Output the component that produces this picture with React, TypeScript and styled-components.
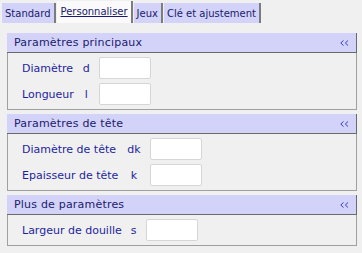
import styled, { createGlobalStyle } from 'styled-components';

const GlobalStyle = createGlobalStyle`
  html, body {
    margin: 0;
    padding: 0;
    background: #f0f0f0;
  }
  body {
    font-family: Tahoma, "DejaVu Sans", Verdana, sans-serif;
    font-size: 11px;
  }
`;

type Field = { name: string; symbol: string };
type Group = { title: string; fields: Field[] };

const tabs = ['Standard', 'Personnaliser', 'Jeux', 'Clé et ajustement'];

const groups: Group[] = [
  {
    title: 'Paramètres principaux',
    fields: [
      { name: 'Diamètre', symbol: 'd' },
      { name: 'Longueur', symbol: 'l' },
    ],
  },
  {
    title: 'Paramètres de tête',
    fields: [
      { name: 'Diamètre de tête', symbol: 'dk' },
      { name: 'Epaisseur de tête', symbol: 'k' },
    ],
  },
  {
    title: 'Plus de paramètres',
    fields: [{ name: 'Largeur de douille', symbol: 's' }],
  },
];

const CollapseIcon = () => (
  <svg width="9" height="6" viewBox="0 0 9 6">
    <polyline points="3.5,0.5 0.8,3 3.5,5.5" fill="none" stroke="#3b3bc0" strokeWidth="1" />
    <polyline points="8,0.5 5.3,3 8,5.5" fill="none" stroke="#3b3bc0" strokeWidth="1" />
  </svg>
);

const App = () => {
  return (
    <>
      <GlobalStyle />
      <Page>
        <TabBar>
          {tabs.map((t, i) => (
            <Tab key={t} $active={i === 1}>
              {t}
            </Tab>
          ))}
        </TabBar>
        <Groups>
          {groups.map((g) => (
            <Panel key={g.title}>
              <PanelHeader>
                <span>{g.title}</span>
                <CollapseIcon />
              </PanelHeader>
              <PanelBody>
                {g.fields.map((f) => (
                  <Row key={f.symbol}>
                    <Label>{f.name}</Label>
                    <Symbol>{f.symbol}</Symbol>
                    <Input type="text" />
                  </Row>
                ))}
              </PanelBody>
            </Panel>
          ))}
        </Groups>
      </Page>
    </>
  );
};

const Page = styled.div`
  width: 362px;
  height: 253px;
  box-sizing: border-box;
  padding: 1px 0 0 2px;
  background: #f0f0f0;
`;

const TabBar = styled.div`
  display: flex;
  align-items: flex-end;
  height: 22px;
`;

const Tab = styled.div<{ $active?: boolean }>`
  display: flex;
  align-items: center;
  height: ${(p) => (p.$active ? '22px' : '20px')};
  padding: ${(p) => (p.$active ? '0 3px 2px 4px' : '0 3px 0 3px')};
  box-sizing: border-box;
  margin-right: 1px;
  background: ${(p) => (p.$active ? '#fafafa' : '#d3d3f9')};
  border-right: 2px solid #7c7c7c;
  color: #1a1a6c;
  font-size: 10px;
  text-decoration: ${(p) => (p.$active ? 'underline' : 'none')};
  white-space: nowrap;
`;

const Groups = styled.div`
  display: flex;
  flex-direction: column;
  gap: 4px;
  margin: 10px 0 0 5px;
  width: 350px;
`;

const Panel = styled.div`
  display: flex;
  flex-direction: column;
`;

const PanelHeader = styled.div`
  display: flex;
  align-items: center;
  justify-content: space-between;
  height: 20px;
  box-sizing: border-box;
  padding: 0 7px 0 7px;
  background: #d3d3f9;
  border-bottom: 1px solid #6a6a6a;
  border-right: 1px solid #6a6a6a;
  color: #20206c;
  letter-spacing: 0.2px;
`;

const PanelBody = styled.div`
  display: grid;
  grid-template-columns: max-content max-content 52px;
  column-gap: 9px;
  row-gap: 4px;
  padding: 4px 0 4px 14px;
  border: 1px solid #a0a0a0;
  border-top: none;
`;

const Row = styled.div`
  display: contents;
`;

const Label = styled.span`
  align-self: center;
  color: #1f1f9c;
`;

const Symbol = styled.span`
  align-self: center;
  justify-self: center;
  color: #1f1f9c;
`;

const Input = styled.input`
  width: 52px;
  height: 22px;
  box-sizing: border-box;
  margin: 0;
  padding: 0 3px;
  border: 1px solid #d6d6d6;
  border-radius: 2px;
  background: #ffffff;
  font: inherit;
  outline: none;
`;

export default App;
